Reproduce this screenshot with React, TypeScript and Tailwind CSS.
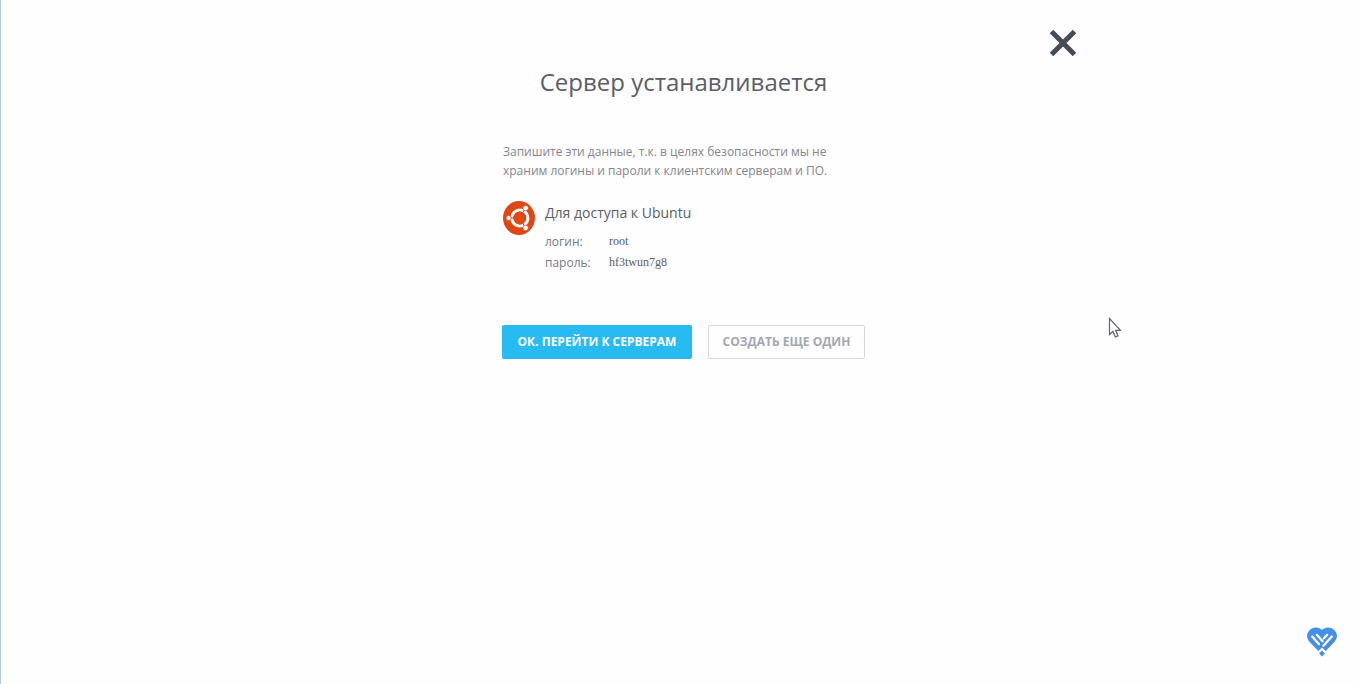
type Credential = {
  label: string;
  value: string;
};

const credentials: Credential[] = [
  { label: "логин:", value: "root" },
  { label: "пароль:", value: "hf3twun7g8" },
];

function CloseIcon() {
  return (
    <svg viewBox="0 0 28 28" className="h-7 w-7" aria-hidden="true">
      <path d="M2.500 2.500 25.500 25.500M25.500 2.500 2.500 25.500" stroke="#474b55" strokeWidth="5" fill="none" />
    </svg>
  );
}

function UbuntuLogo() {
  return (
    <svg viewBox="0 0 32 34" className="h-[34px] w-8 shrink-0" aria-hidden="true">
      <ellipse cx="16" cy="17" rx="16" ry="17" fill="#dd4814" />
      <circle cx="16.8" cy="17" r="8" stroke="#fff" strokeWidth="3.2" fill="none" />
      <path d="M16.8 17H5M16.8 17 22.700 6.800M16.800 17 22.700 27.200" stroke="#dd4814" strokeWidth="1" />
      <circle cx="16.8" cy="17" r="6.4" fill="#dd4814" />
      <g fill="#fff" stroke="#dd4814" strokeWidth="0.8">
        <circle cx="5.600" cy="17" r="2.6" />
        <circle cx="22.6" cy="7.100" r="2.8" />
        <circle cx="22.6" cy="26.900" r="2.8" />
      </g>
    </svg>
  );
}

function HeartLogo() {
  return (
    <svg viewBox="0 0 30 30" className="h-[30px] w-[30px]" aria-hidden="true">
      <path
        d="M15 3C12.200-.2 6.600-.5 3 2.700-.8 6.100-.9 10.800 2.400 14.700L11.300 24 15 20.600 18.700 24 27.600 14.700C30.900 10.800 30.800 6.100 27 2.700 23.400-.5 17.800-.2 15 3Z"
        fill="#4590e6"
      />
      <path
        d="M5.200 9.500 12 17.200M9.800 7.800 15.600 14.200M20.200 7.800 16.800 11.600M24.800 9.500 16.400 18.800"
        stroke="#fff"
        strokeWidth="2.200"
        strokeLinecap="round"
        fill="none"
      />
      <path d="m15 23.400 2.900 3L15 29.400l-2.900-3Z" fill="#4590e6" />
    </svg>
  );
}

function Pointer() {
  return (
    <svg
      viewBox="0 0 14 22"
      className="pointer-events-none absolute top-[317px] left-[1107px] h-[22px] w-3.5"
      aria-hidden="true"
    >
      <path
        d="M1.500 1.500V17.500L5 14.200 7.300 20 10 18.900 7.700 13.300H12.500Z"
        fill="#fff"
        stroke="#62626a"
        strokeWidth="1.200"
      />
    </svg>
  );
}

export default function App() {
  return (
    <div className="relative min-h-screen border-l border-[#b4c6e6] bg-[#fefdff] pl-2 font-['Open_Sans',sans-serif] text-[#5b5e66]">
      <main className="mx-auto max-w-[786px] pt-[29px]">
        <div className="flex justify-end">
          <button type="button" aria-label="Закрыть" className="cursor-pointer">
            <CloseIcon />
          </button>
        </div>

        <div className="mx-auto max-w-[363px]">
          <h1 className="mt-[7px] text-center text-2xl leading-9 whitespace-nowrap">
            Сервер устанавливается
          </h1>

          <div className="mt-[42px] pl-px">
            <p className="text-xs leading-[19px] text-[#85878c]">
              Запишите эти данные, т.к. в целях безопасности мы не храним логины и пароли к клиентским
              серверам и ПО.
            </p>

            <section className="mt-[21px] flex gap-2.5">
              <UbuntuLogo />
              <div>
                <h2 className="text-sm leading-6">Для доступа к Ubuntu</h2>
                <dl className="mt-1.5 grid grid-cols-[64px_auto] text-xs leading-[21px]">
                  {credentials.map(({ label, value }) => (
                    <div key={label} className="contents">
                      <dt className="text-[#77797f]">{label}</dt>
                      <dd className="font-['Liberation_Serif',serif]">{value}</dd>
                    </div>
                  ))}
                </dl>
              </div>
            </section>
          </div>

          <div className="mt-[52px] flex gap-4 text-xs font-bold whitespace-nowrap">
            <button
              type="button"
              className="h-[34px] w-[190px] cursor-pointer rounded-xs bg-[#28bbf2] text-white"
            >
              ОК. ПЕРЕЙТИ К СЕРВЕРАМ
            </button>
            <button
              type="button"
              className="h-[34px] flex-1 cursor-pointer rounded-xs border border-[#d6d8df] text-[#a2a7b1]"
            >
              СОЗДАТЬ ЕЩЕ ОДИН
            </button>
          </div>
        </div>
      </main>

      <Pointer />
      <button type="button" aria-label="Поддержка" className="fixed right-[21px] bottom-[27px] cursor-pointer">
        <HeartLogo />
      </button>
    </div>
  );
}
